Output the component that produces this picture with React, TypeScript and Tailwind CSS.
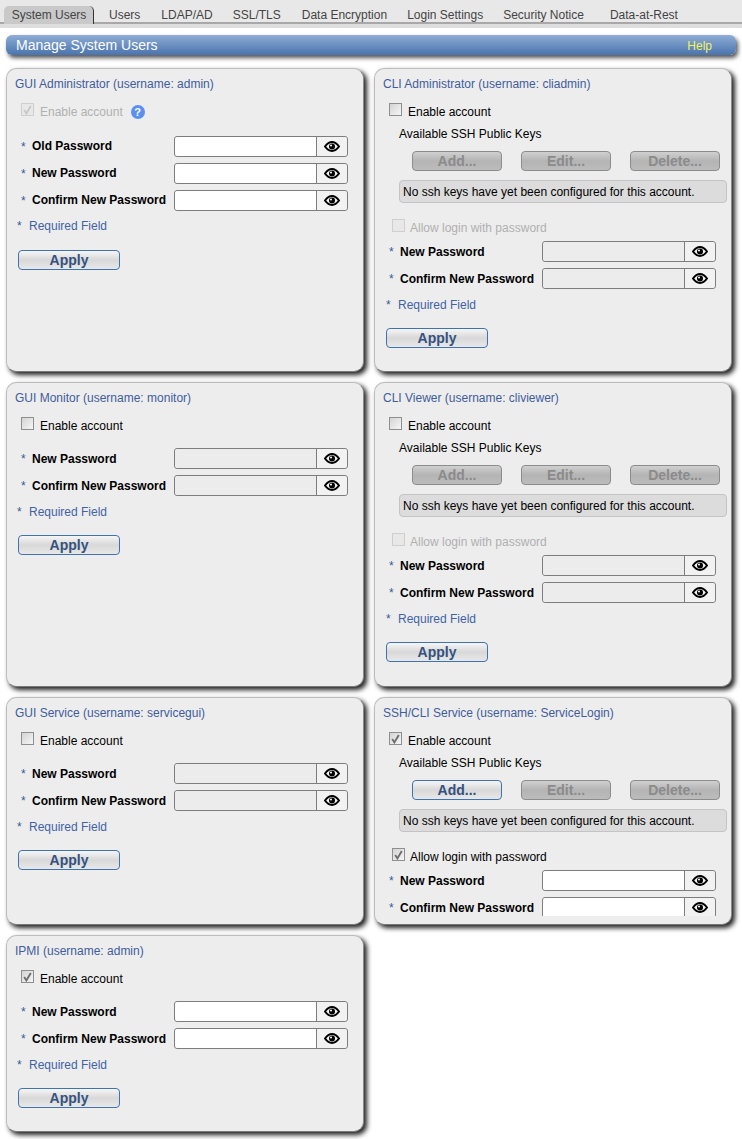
import React from 'react';

const FONT = "font-['Liberation_Sans',Arial,sans-serif]";

function EyeIcon() {
  return (
    <svg width="16" height="11" viewBox="0 0 16 11" fill="none">
      <path d="M1 5.5 C3.5 2 5.8 1 8 1 S12.5 2 15 5.5 C12.5 9 10.2 10 8 10 S3.5 9 1 5.5 Z" stroke="#000" strokeWidth="2" />
      <circle cx="8" cy="5.5" r="3" fill="#000" />
      <circle cx="7" cy="4.5" r="1" fill="#fff" />
    </svg>
  );
}

function Check({ checked, disabled }: { checked?: boolean; disabled?: boolean }) {
  return (
    <span
      className={`flex h-[13px] w-[13px] shrink-0 items-center justify-center border ${
        disabled ? 'border-[#cfcfcf] bg-[#e8e8e8]' : 'border-[#8f8f8f] bg-gradient-to-br from-[#d4d4d4] to-[#f6f6f6]'
      }`}
    >
      {checked && (
        <svg width="9" height="10" viewBox="0 0 9 10" fill="none">
          <path d="M1.2 5 L3.4 8.4 L7.8 1" stroke={disabled ? '#c8c8c8' : '#6e6e6e'} strokeWidth="1.9" />
        </svg>
      )}
    </span>
  );
}

function Field({ label, disabled, lift }: { label: string; disabled?: boolean; lift?: boolean }) {
  return (
    <div className="flex h-[21px] items-center">
      <span className="w-[11px] text-[12px] text-[#3a5a94]">*</span>
      <span className={`w-[142px] text-[12px] font-bold text-black ${lift ? 'pb-[1px]' : ''}`}>{label}</span>
      <div className="flex h-[21px] w-[174px] rounded-[3px] border border-[#7d7d7d]">
        <div className={`flex-1 rounded-l-[3px] ${disabled ? 'bg-[#ececec]' : 'bg-white'}`} />
        <div className="flex w-[31px] items-center justify-center rounded-r-[3px] border-l border-[#7d7d7d] bg-[#f2f2f2]">
          <EyeIcon />
        </div>
      </div>
    </div>
  );
}

function Required() {
  return (
    <div className="flex h-[16px] items-center text-[12px] text-[#3f62a8]">
      <span className="w-[12px] text-[#3a5a94]">*</span>
      <span>Required Field</span>
    </div>
  );
}

function ApplyButton() {
  return (
    <button
      type="button"
      className="h-[20px] w-[102px] rounded-[4px] border border-[#3f73b0] bg-gradient-to-b from-[#f6f6f6] via-[#d8d8d8] to-[#e8e8e8] text-[14px] leading-[18px] font-bold text-[#34517f]"
    >
      Apply
    </button>
  );
}

function KeyButton({ label, enabled }: { label: string; enabled?: boolean }) {
  return (
    <button
      type="button"
      className={`h-[20px] w-[90px] rounded-[4px] border text-[14px] leading-[18px] font-bold ${
        enabled
          ? 'border-[#3f73b0] bg-gradient-to-b from-[#f6f6f6] via-[#d8d8d8] to-[#e8e8e8] text-[#34517f]'
          : 'border-[#8c8c8c] bg-gradient-to-b from-[#d0d0d0] via-[#b4b4b4] to-[#bcbcbc] text-[#8b8b8b]'
      }`}
    >
      {label}
    </button>
  );
}

function Panel({ title, children }: { title: string; children: React.ReactNode }) {
  return (
    <section className="rounded-[10px] border border-[#bdbdbd] border-r-[#8a8a8a] border-b-[#777] bg-[#ededed] shadow-[3px_3px_5px_#222]">
      <h2 className="mt-[8px] ml-[8px] h-[15px] text-[12px] leading-[15px] font-normal text-[#3f5c9c]">{title}</h2>
      {children}
    </section>
  );
}

function GuiPanel({
  title,
  enabled,
  locked,
  old,
  disabledFields,
}: {
  title: string;
  enabled?: boolean;
  locked?: boolean;
  old?: boolean;
  disabledFields?: boolean;
}) {
  return (
    <Panel title={title}>
      <div className="mt-[11px] ml-[14px] flex h-[16px] items-start">
        <Check checked={enabled} disabled={locked} />
        <span className={`ml-[6px] pt-[1px] text-[12px] leading-[16px] ${locked ? 'text-[#b0b0b0]' : 'text-black'}`}>
          Enable account
        </span>
        {locked && (
          <span className="mt-[2px] ml-[8px] flex h-[14px] w-[14px] items-center justify-center rounded-full bg-[#5b8ff0] text-[11px] leading-none font-bold text-white">
            ?
          </span>
        )}
      </div>
      <div className={`${old ? 'mt-[17px]' : 'mt-[15px]'} ml-[14px] flex flex-col gap-[6px]`}>
        {old && <Field label="Old Password" lift />}
        <Field label="New Password" disabled={disabledFields} lift={old} />
        <Field label="Confirm New Password" disabled={disabledFields} lift={old} />
      </div>
      <div className={`${old ? 'mt-[7px]' : 'mt-[8px]'} ml-[10px]`}>
        <Required />
      </div>
      <div className={`${old ? 'mt-[14px]' : 'mt-[13px]'} ml-[11px]`}>
        <ApplyButton />
      </div>
    </Panel>
  );
}

function CliPanel({ title, enabled }: { title: string; enabled?: boolean }) {
  return (
    <Panel title={title}>
      {/* this panel is shorter than its form when the account is on, the form gets cut off */}
      <div className={`overflow-hidden ${enabled ? 'h-[195px]' : ''}`}>
        <div className="mt-[11px] ml-[14px] flex h-[16px] items-start">
          <Check checked={enabled} />
          <span className="ml-[6px] pt-[1px] text-[12px] leading-[16px] text-black">Enable account</span>
        </div>
        <div className="mt-[7px] ml-[24px] h-[16px] text-[12px] leading-[16px] text-black">Available SSH Public Keys</div>
        <div className="mt-[9px] ml-[37px] flex gap-[19px]">
          <KeyButton label="Add..." enabled={enabled} />
          <KeyButton label="Edit..." />
          <KeyButton label="Delete..." />
        </div>
        <div className="mt-[9px] ml-[24px] flex h-[23px] w-[328px] items-center rounded-[4px] border border-[#c4c4c4] bg-[#dcdcdc] pl-[3px] text-[12px] text-black">
          No ssh keys have yet been configured for this account.
        </div>
        <div className="mt-[16px] ml-[17px] flex h-[16px] items-start">
          <Check checked={enabled} disabled={!enabled} />
          <span className={`ml-[5px] pt-[1px] text-[12px] leading-[16px] ${enabled ? 'text-black' : 'text-[#b0b0b0]'}`}>
            Allow login with password
          </span>
        </div>
        <div className="mt-[6px] ml-[14px] flex flex-col gap-[6px]">
          <Field label="New Password" disabled={!enabled} />
          <Field label="Confirm New Password" disabled={!enabled} />
        </div>
        {!enabled && (
          <>
            <div className="mt-[8px] ml-[11px]">
              <Required />
            </div>
            <div className="mt-[13px] ml-[11px]">
              <ApplyButton />
            </div>
          </>
        )}
      </div>
    </Panel>
  );
}

const TABS = [
  { label: 'Users', cls: 'ml-[15px]' },
  { label: 'LDAP/AD', cls: 'ml-[21px]' },
  { label: 'SSL/TLS', cls: 'ml-[20px]' },
  { label: 'Data Encryption', cls: 'ml-[21px]' },
  { label: 'Login Settings', cls: 'ml-[20px]' },
  { label: 'Security Notice', cls: 'ml-[20px]' },
  { label: 'Data-at-Rest', cls: 'ml-[26px]' },
];

export default function App() {
  return (
    <div className={`${FONT} h-[1139px] w-[742px] overflow-hidden bg-white`}>
      <nav className="flex h-[28px] bg-[linear-gradient(#e8e8e8_0_22px,#a8a8a8_22px_24px,#dedede_24px)] pt-[6px]">
        <div className="ml-[4px] flex h-[18px] w-[90px] items-center justify-center rounded-t-[5px] border-r border-r-[#333] bg-[#c9c9c9] pl-[1px] text-[12px] text-[#444]">
          System Users
        </div>
        {TABS.map((t) => (
          <div key={t.label} className={`${t.cls} flex h-[18px] items-center text-[12px] text-[#444]`}>
            {t.label}
          </div>
        ))}
      </nav>

      <header className="mx-[6px] mt-[7px] flex h-[20px] items-center justify-between rounded-[6px] bg-gradient-to-b from-[#8fadd6] to-[#4a74ad] pr-[24px] pl-[10px] shadow-[2px_3px_4px_#555]">
        <h1 className="pt-[1px] text-[14px] font-normal text-white">Manage System Users</h1>
        <span className="pt-[1px] text-[12px] text-[#f2f25a]">Help</span>
      </header>

      <main className="mt-[13px] ml-[6px] grid w-[726px] grid-cols-[358px_358px] grid-rows-[304px_305px_228px_197px] gap-[10px]">
        <GuiPanel title="GUI Administrator (username: admin)" enabled locked old />
        <CliPanel title="CLI Administrator (username: cliadmin)" />
        <GuiPanel title="GUI Monitor (username: monitor)" disabledFields />
        <CliPanel title="CLI Viewer (username: cliviewer)" />
        <GuiPanel title="GUI Service (username: servicegui)" disabledFields />
        <CliPanel title="SSH/CLI Service (username: ServiceLogin)" enabled />
        <GuiPanel title="IPMI (username: admin)" enabled />
      </main>
    </div>
  );
}
